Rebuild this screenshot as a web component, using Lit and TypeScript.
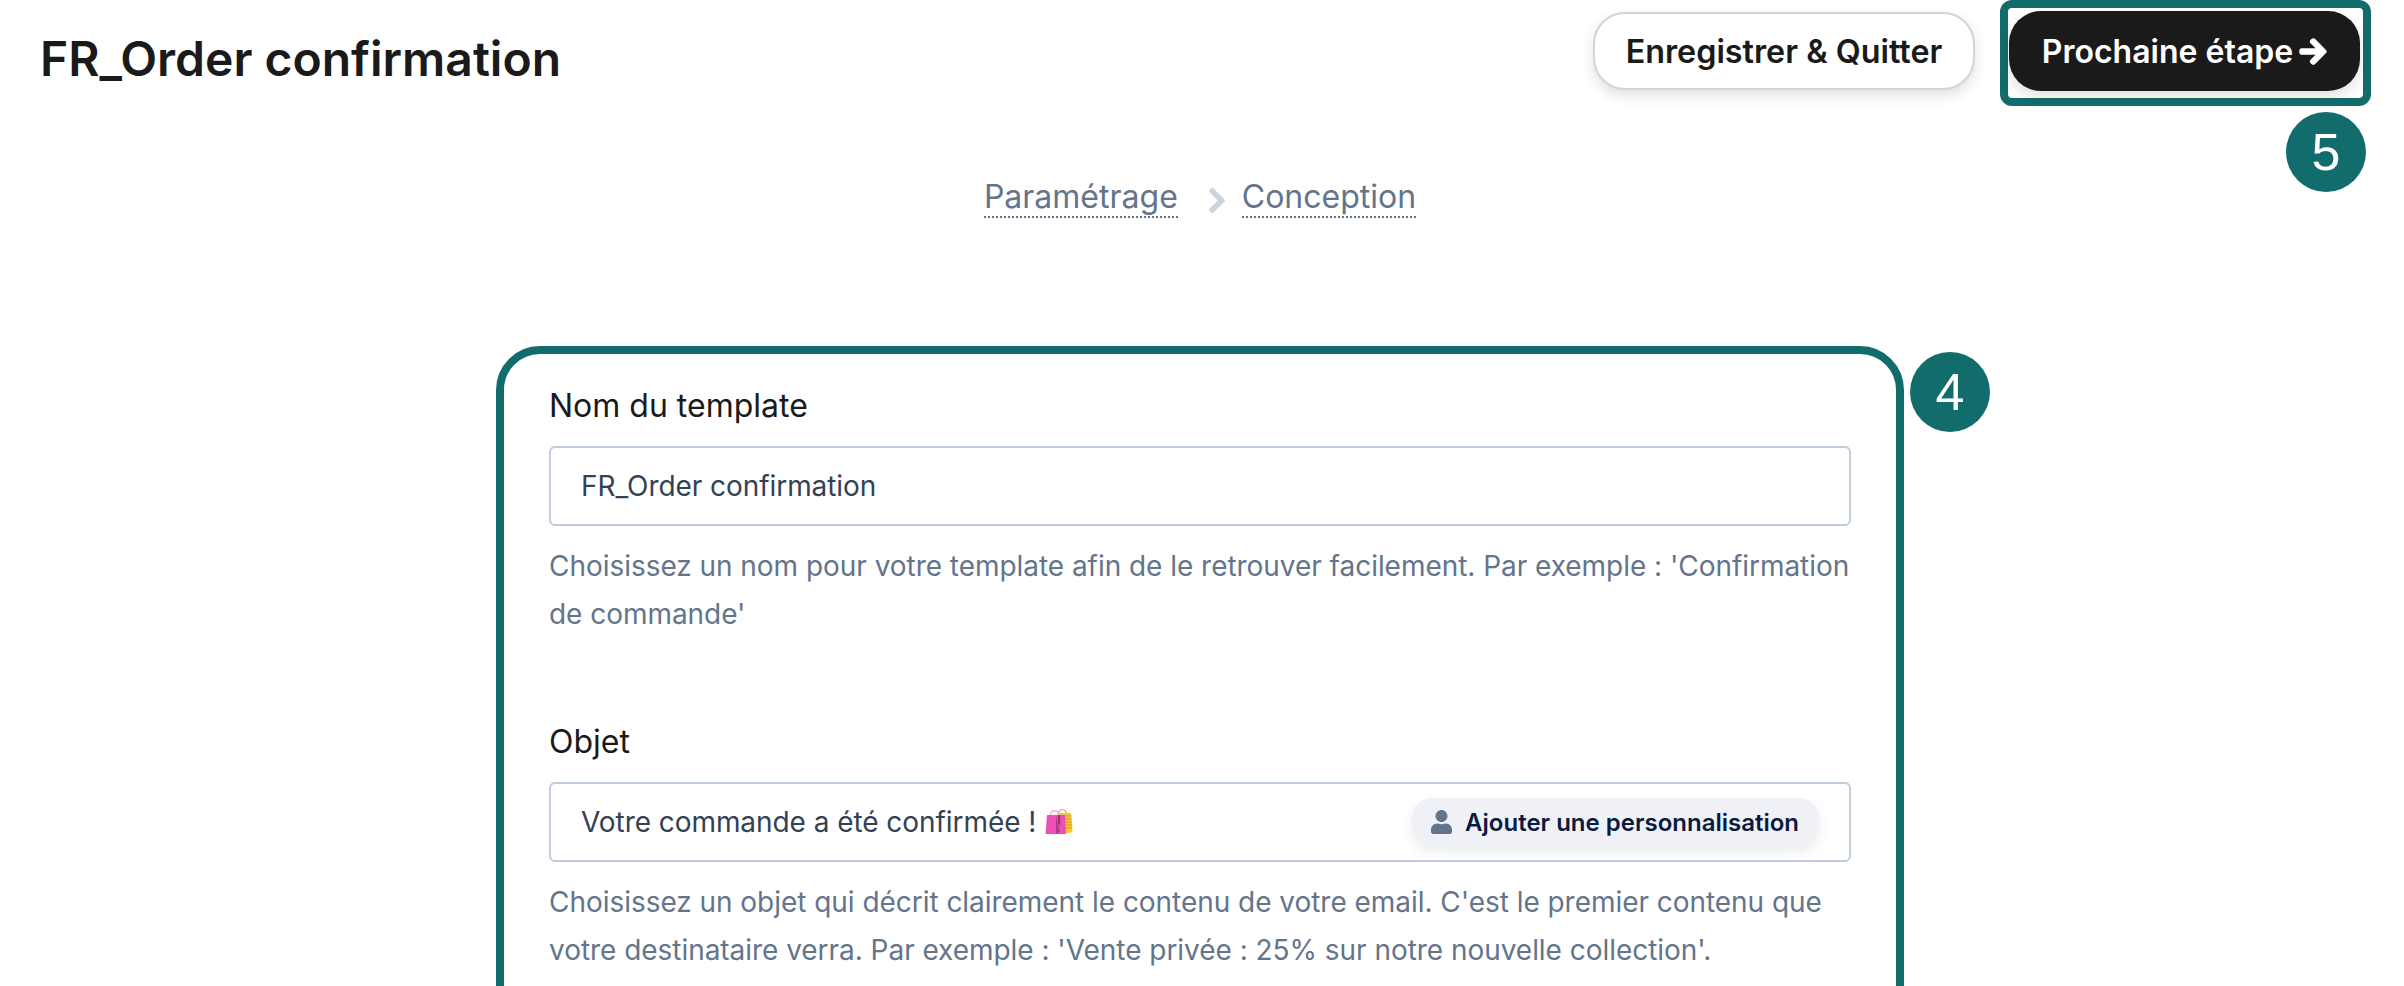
import { LitElement, html, css } from "lit";
import { customElement } from "lit/decorators.js";

const arrow = html`<svg class="arrow" viewBox="-16 -16 480 544" aria-hidden="true"><path fill="currentColor" stroke="currentColor" stroke-width="32" stroke-linejoin="round" d="M190.5 66.9l22.2-22.2c9.4-9.4 24.6-9.4 33.9 0L441 239c9.4 9.4 9.4 24.6 0 33.9L246.6 467.3c-9.4 9.4-24.6 9.4-33.9 0l-22.2-22.2c-9.5-9.5-9.3-25 .4-34.3L311.4 296H24c-13.3 0-24-10.7-24-24v-32c0-13.3 10.7-24 24-24h287.4L190.9 101.2c-9.8-9.3-10-24.8-.4-34.3z"/></svg>`;
const user = html`<svg class="user" viewBox="0 0 448 512" aria-hidden="true"><path fill="currentColor" d="M224 256c70.7 0 128-57.3 128-128S294.7 0 224 0 96 57.3 96 128s57.3 128 128 128zm89.6 32h-16.7c-22.2 10.2-46.9 16-72.9 16s-50.6-5.8-72.9-16h-16.7C60.2 288 0 348.2 0 422.4V464c0 26.5 21.5 48 48 48h352c26.5 0 48-21.5 48-48v-41.6c0-74.2-60.2-134.4-134.4-134.4z"/></svg>`;
const chevron = html`<svg class="chevron" viewBox="16 28 288 456" aria-hidden="true"><path fill="currentColor" stroke="currentColor" stroke-width="20" stroke-linejoin="round" d="M285.476 272.971L91.132 467.314c-9.373 9.373-24.569 9.373-33.941 0l-22.667-22.667c-9.357-9.357-9.375-24.522-.04-33.901L188.505 256 34.484 101.255c-9.335-9.379-9.317-24.544.04-33.901l22.667-22.667c9.373-9.373 24.569-9.373 33.941 0L285.475 239.03c9.373 9.372 9.373 24.568.001 33.941z"/></svg>`;
const bags = html`<svg class="bags" viewBox="0 0 28 27" aria-hidden="true">
  <path d="M13 8c1-7 7-8 9 0" fill="none" stroke="#f3b25c" stroke-width="1.4"/>
  <path d="M15 6h11l1.500 19-4 1h-7z" fill="#f6c62f"/>
  <path d="M19 9h7.600M19 12h7.900M19 15h8.100M19 18h8.300M19 21h8.500" stroke="#d9962a" stroke-width="1.200"/>
  <path d="M5 9c1-7 8-7 10 0" fill="none" stroke="#f7a6d8" stroke-width="1.400"/>
  <path d="M2 8h18l1 19H0.500z" fill="#ee4fb7"/>
  <path d="M11 9l4 16-4 2z" fill="#b23a8c"/>
  <path d="M13 8h2.200v11l-2.200-3z" fill="#8e3b66"/>
</svg>`;

@customElement("app-root")
export class AppRoot extends LitElement {
  static styles = css`
    :host {
      display: block;
      height: 986px;
      overflow: hidden;
      background: #fff;
      font-family: Inter, "Liberation Sans", sans-serif;
      color: #1a1a1a;
    }
    .page {
      width: 2400px;
    }
    .header {
      display: flex;
      align-items: flex-start;
      padding: 0 33px 0 40px;
      width: 2404px;
      box-sizing: border-box;
    }
    h1 {
      margin: 0 auto 0 0;
      padding-top: 31px;
      font-size: 48px;
      line-height: 56px;
      font-weight: 600;
      color: #1a1a1a;
    }
    .btn {
      box-sizing: border-box;
      display: inline-flex;
      align-items: center;
      justify-content: center;
      font-family: inherit;
      font-size: 32px;
      font-weight: 600;
      border-radius: 32px;
      box-shadow: 0 6px 14px rgba(0, 0, 0, 0.12);
    }
    .save {
      width: 382px;
      height: 78px;
      margin-top: 12px;
      margin-right: 25px;
      background: #fff;
      color: #1a1a1a;
      border: 2px solid #d4d4d4;
      font-size: 32.3px;
    }
    .highlight {
      position: relative;
      box-sizing: border-box;
      width: 371px;
      height: 106px;
      padding: 3px 4px 0 1px;
      border: 8px solid #136c6c;
      border-radius: 12px;
    }
    .next {
      width: 351px;
      height: 80px;
      gap: 6px;
      background: #1a1a1a;
      color: #fff;
      border: 0;
    }
    .arrow {
      width: 28px;
      height: 31px;
    }
    .badge {
      position: absolute;
      box-sizing: border-box;
      width: 80px;
      height: 80px;
      border-radius: 50%;
      background: #136c6c;
      color: #fff;
      display: flex;
      align-items: center;
      justify-content: center;
      font-family: "Liberation Sans", Arial, sans-serif;
      font-size: 52px;
      line-height: 1;
    }
    .badge5 {
      left: 278px;
      top: 104px;
    }
    .badge4 {
      left: 1406px;
      top: -2px;
    }
    .steps {
      display: flex;
      justify-content: center;
      align-items: center;
      margin-top: 72px;
      font-size: 32px;
      line-height: 38px;
      color: #64748b;
    }
    .step {
      border-bottom: 2px dotted #64748b;
    }
    .chevron {
      width: 16px;
      height: 25px;
      color: #cbd5e1;
      margin: 5px 17px 0 31px;
    }
    .card {
      position: relative;
      box-sizing: border-box;
      width: 1408px;
      min-height: 800px;
      margin: 128px auto 0;
      padding: 32px 45px 40px;
      border: 8px solid #136c6c;
      border-radius: 44px;
    }
    label {
      display: block;
      font-size: 32px;
      line-height: 40px;
      margin-bottom: 20px;
      color: #1a1a1a;
    }
    .field {
      box-sizing: border-box;
      height: 80px;
      display: flex;
      align-items: center;
      padding: 0 30px;
      border: 2px solid #c0ccde;
      border-radius: 6px;
      font-size: 28px;
      letter-spacing: -0.06px;
      color: #334155;
    }
    .value {
      display: inline-flex;
      align-items: center;
      gap: 9px;
    }
    .bags {
      width: 28px;
      height: 27px;
      margin-top: -4px;
    }
    .pill {
      margin-left: auto;
      height: 48px;
      display: inline-flex;
      align-items: center;
      gap: 13px;
      padding: 0 20px 0 19px;
      border-radius: 20px;
      background: #f0f1f7;
      box-shadow: 0 6px 12px rgba(15, 23, 42, 0.08);
      color: #0a1a40;
      font-size: 24px;
      font-weight: 600;
      letter-spacing: 0;
    }
    .user {
      width: 21px;
      height: 24px;
      color: #64748b;
    }
    .help {
      margin: 16px 0 0;
      font-size: 28px;
      line-height: 48px;
      letter-spacing: -0.04px;
      color: #64748b;
    }
    .group + .group {
      margin-top: 84px;
    }
  `;

  render() {
    return html`
      <div class="page">
        <header class="header">
          <h1>FR_Order confirmation</h1>
          <div class="btn save">Enregistrer &amp; Quitter</div>
          <div class="highlight">
            <div class="btn next">Prochaine étape ${arrow}</div>
            <div class="badge badge5">5</div>
          </div>
        </header>
        <nav class="steps">
          <span class="step">Paramétrage</span>
          ${chevron}
          <span class="step">Conception</span>
        </nav>
        <section class="card">
          <div class="badge badge4">4</div>
          <div class="group">
            <label>Nom du template</label>
            <div class="field"><span class="value">FR_Order confirmation</span></div>
            <p class="help">Choisissez un nom pour votre template afin de le retrouver facilement. Par exemple : 'Confirmation de commande'</p>
          </div>
          <div class="group">
            <label>Objet</label>
            <div class="field">
              <span class="value">Votre commande a été confirmée ! ${bags}</span>
              <span class="pill">${user}Ajouter une personnalisation</span>
            </div>
            <p class="help">Choisissez un objet qui décrit clairement le contenu de votre email. C'est le premier contenu que votre destinataire verra. Par exemple : 'Vente privée : 25% sur notre nouvelle collection'.</p>
          </div>
        </section>
      </div>
    `;
  }
}
